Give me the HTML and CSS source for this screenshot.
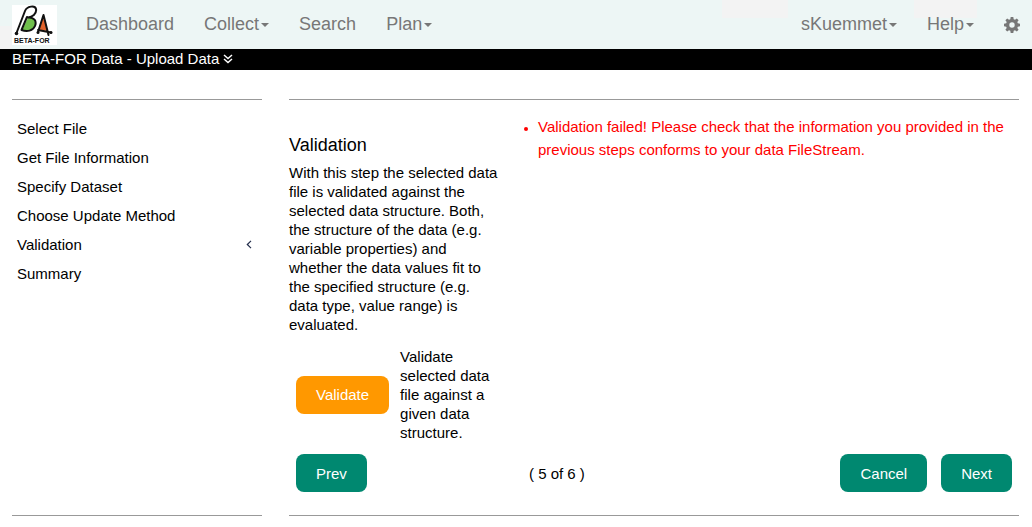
FILE: index.html
```html
<!DOCTYPE html>
<html lang="en">
<head>
<meta charset="utf-8">
<title>BETA-FOR Data - Upload Data</title>
<link rel="stylesheet" href="styles.css">
</head>
<body>
<header class="navbar">
  <a class="brand" href="#" aria-label="Home">
    <svg class="logo" viewBox="0 0 45 40" role="img" aria-label="Logo">
      <path d="M16 13C21 12 24 16 23 20C22 26 16 27 10 25Z" fill="#70bf4c"/>
      <path d="M31 12L36 26L27 25Z" fill="#e2622a"/>
      <path d="M4.500 28L13 6C15 1 23 0 24 4C25 9 20 12 16 12.500C22 12 25 16 23 21C21 26 15 27 9.500 25L15 12M26 27L31.500 10L36.500 30M26 25L39 27.500" fill="none" stroke="#111" stroke-width="2" stroke-linecap="round" stroke-linejoin="round"/>
      <circle cx="4.500" cy="28.500" r="1.800" fill="#111"/><circle cx="26" cy="27.500" r="1.500" fill="#111"/><circle cx="39" cy="27.500" r="1.500" fill="#111"/>
      <text class="logo-text" x="2" y="38">BETA-FOR</text>
    </svg>
  </a>
  <nav class="menu">
    <a href="#">Dashboard</a>
    <a class="drop" href="#">Collect</a>
    <a href="#">Search</a>
    <a class="drop" href="#">Plan</a>
  </nav>
  <nav class="menu menu-user">
    <a class="drop" href="#">sKuemmet</a>
    <a class="drop" href="#">Help</a>
    <a href="#" aria-label="Settings">
      <svg class="gear" viewBox="0 0 16 16"><path fill="#777" fill-rule="evenodd" d="M6.7 0h2.6l.4 2.2 1.3.5L12.800 1.400 14.600 3.200 13.300 5l.5 1.300 2.200.4v2.600l-2.200.4-.5 1.300 1.300 1.800-1.800 1.800L11 13.300l-1.300.5L9.300 16H6.700l-.4-2.200L5 13.300 3.200 14.600 1.400 12.800 2.700 11l-.5-1.300L0 9.300V6.700l2.200-.4L2.700 5 1.400 3.200 3.200 1.400 5 2.700l1.300-.5zM8 5.300a2.700 2.700 0 1 0 0 5.400 2.700 2.700 0 0 0 0-5.400z"/></svg>
    </a>
  </nav>
</header>
<div class="titlebar">
  <span>BETA-FOR Data - Upload Data</span>
  <svg class="chevrons" viewBox="0 0 10 10"><path d="M1 1L5 4.500L9 1M1 5L5 8.500L9 5" fill="none" stroke="#fff" stroke-width="1.500"/></svg>
</div>
<div class="layout">
  <aside class="sidebar">
    <ol class="steps">
      <li><a href="#">Select File</a></li>
      <li><a href="#">Get File Information</a></li>
      <li><a href="#">Specify Dataset</a></li>
      <li><a href="#">Choose Update Method</a></li>
      <li><a href="#" aria-current="step">Validation<svg class="angle" viewBox="0 0 6 9"><path d="M5 .8L1.300 4.500L5 8.200" fill="none" stroke="#222c4a" stroke-width="1.200"/></svg></a></li>
      <li><a href="#">Summary</a></li>
    </ol>
  </aside>
  <main class="wizard">
    <div class="content">
      <section class="info">
        <h1>Validation</h1>
        <p>With this step the selected data file is validated against the selected data structure. Both, the structure of the data (e.g. variable properties) and whether the data values fit to the specified structure (e.g. data type, value range) is evaluated.</p>
        <div class="action">
          <button class="btn btn-warn" type="button" aria-describedby="hint">Validate</button>
          <p id="hint">Validate selected data file against a given data structure.</p>
        </div>
      </section>
      <ul class="errors">
        <li>Validation failed! Please check that the information you provided in the previous steps conforms to your data FileStream.</li>
      </ul>
    </div>
    <div class="pager">
      <div><button class="btn" type="button">Prev</button></div>
      <span>( 5 of 6 )</span>
      <div class="pager-end">
        <button class="btn" type="button">Cancel</button>
        <button class="btn" type="button">Next</button>
      </div>
    </div>
  </main>
</div>
</body>
</html>
```
FILE: styles.css
```css
* { box-sizing: border-box; }

body {
  margin: 0;
  background: #fff;
  color: #000;
  font: 15px/19px "Liberation Sans", Arial, sans-serif;
}

a { color: inherit; text-decoration: none; }
h1, p, ul, ol { margin: 0; padding: 0; }

.navbar {
  display: flex;
  align-items: center;
  padding: 4px 12px;
  min-height: 49px;
  background:
    linear-gradient(#f3f3f3, #f3f3f3) right 244px top / 66px 18px no-repeat,
    linear-gradient(#f3f3f3, #f3f3f3) right 55px top / 63px 18px no-repeat,
    linear-gradient(#f3f3f3, #f3f3f3) left bottom / 12px 23px no-repeat,
    #edf6f5;
  color: #777;
  font-size: 18px;
}

.brand { display: flex; margin-right: 29px; background: #fff; }
.logo { width: 45px; height: 40px; }
.logo-text { font-size: 7px; font-weight: bold; fill: #111; }

.menu { display: flex; align-items: center; gap: 30px; }
.menu-user { margin-left: auto; }
.menu a { display: flex; align-items: center; }

.drop::after {
  content: "";
  margin-left: 2px;
  border: 4px solid transparent;
  border-top-color: #777;
  border-bottom: 0;
}

.gear { width: 16px; height: 16px; }

.titlebar {
  display: flex;
  align-items: center;
  gap: 4px;
  padding: 0 12px 2px;
  background: #000;
  color: #fff;
}

.chevrons { width: 10px; height: 10px; }

.layout {
  display: grid;
  grid-template-columns: 250fr 730fr;
  gap: 27px;
  margin: 29px 13px 0 12px;
}

.sidebar, .wizard {
  border-top: 1px solid #999;
  border-bottom: 1px solid #999;
}

.steps { list-style: none; padding: 14px 10px 0 5px; }
.steps a {
  display: flex;
  align-items: center;
  justify-content: space-between;
  padding: 5px 0;
  line-height: 19px;
}
.angle { width: 6px; height: 9px; }

.content {
  display: grid;
  grid-template-columns: 212fr 481fr;
  gap: 37px;
}

.info { padding-top: 35px; }
.info h1 { margin-bottom: 8px; font-size: 18px; font-weight: normal; line-height: 20px; }
.action {
  display: flex;
  align-items: center;
  gap: 11px;
  margin: 13px 0 12px;
  padding-left: 7px;
}

.errors { padding-top: 15px; color: #f00; line-height: 23px; }
.errors li::marker { font-size: 12px; }

.btn {
  height: 38px;
  padding: 0 20px;
  border: 0;
  border-radius: 8px;
  background: #008870;
  color: #fff;
  font: inherit;
}
.btn-warn { background: #ff9800; }

.pager {
  display: grid;
  grid-template-columns: 6fr auto 11fr;
  align-items: center;
  padding: 0 7px 23px;
}
.pager-end { display: flex; justify-content: flex-end; gap: 14px; }
```
